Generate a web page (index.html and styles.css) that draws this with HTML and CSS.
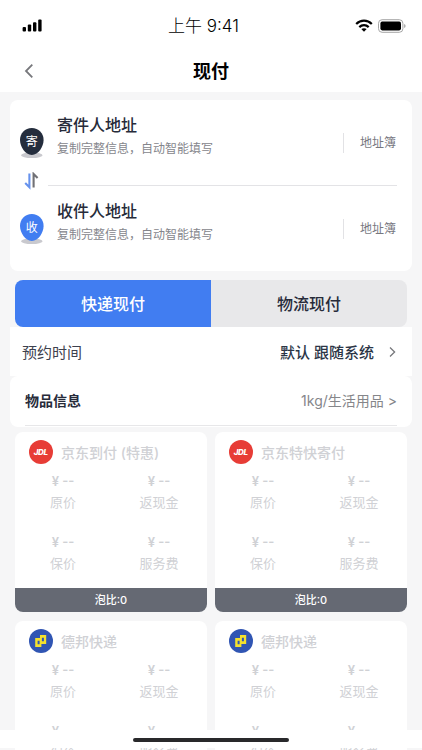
FILE: index.html
```html
<!DOCTYPE html>
<html lang="zh-CN">

<head>
    <meta charset="UTF-8">
    <meta name="viewport" content="width=device-width, initial-scale=1.0">
    <title>现付</title>
    <link rel="stylesheet" href="styles.css">
</head>

<body>

    <header>
        <div class="status-bar">
            <svg class="signal" width="20" height="13" viewBox="0 0 20 13">
                <rect x="0.6" y="8" width="3.4" height="4.6" rx="1"/>
                <rect x="5.8" y="5.6" width="3.4" height="7" rx="1"/>
                <rect x="11" y="3.2" width="3.4" height="9.4" rx="1"/>
                <rect x="16.2" y="0.4" width="3.4" height="12.2" rx="1"/>
            </svg>
            <span class="time">上午 9:41</span>
            <div class="status-right">
                <svg width="18" height="13" viewBox="0 0 18 13">
                    <g fill="none" stroke="#000" stroke-width="2.2">
                        <path d="M1.2 5C5.6 0.6 12.4 0.6 16.8 5"/>
                        <path d="M4.3 8.1C7 5.5 11 5.5 13.7 8.1"/>
                    </g>
                    <path d="M6.3 10.1C7.8 8.8 10.2 8.8 11.7 10.1L9 12.7Z"/>
                </svg>
                <svg width="28" height="14" viewBox="0 0 28 14">
                    <rect x="0.5" y="0.7" width="24.4" height="12.6" rx="3.6" fill="#fff" stroke="#a6a6a6"/>
                    <rect x="2.4" y="2.6" width="20.6" height="8.8" rx="1.8"/>
                    <path d="M26.1 5V9Q27.6 8.3 27.6 7T26.1 5Z" fill="#a6a6a6"/>
                </svg>
            </div>
        </div>
        <div class="nav">
            <svg width="10" height="16" viewBox="0 0 10 16"><path d="M8.3 1.7L2 8L8.3 14.3" fill="none" stroke="#77787c" stroke-width="1.8"/></svg>
            <h1>现付</h1>
        </div>
    </header>

    <main>
        <div class="address">
            <div class="address-row">
                <svg class="pin" width="24" height="32" viewBox="0 0 24 32">
                    <ellipse cx="11.8" cy="27.2" rx="10.8" ry="2.9" fill="#c9c9ce"/>
                    <path d="M11.8 0C5 0 0 5.1 0 12C0 18.5 5.2 27 11.8 27S23.6 18.5 23.6 12C23.6 5.1 18.6 0 11.8 0Z" fill="#242d3d"/>
                    <text x="11.8" y="18" text-anchor="middle">寄</text>
                </svg>
                <div class="address-text">
                    <h2>寄件人地址</h2>
                    <p>复制完整信息，自动智能填写</p>
                </div>
                <span class="book">地址簿</span>
            </div>
            <div class="swap">
                <svg width="16" height="18" viewBox="0 0 16 18" fill="none" stroke-width="2.1">
                    <path d="M5.4 1.6V15.2L1.2 11" stroke="#6692ed"/>
                    <path d="M9.6 15.6V2L13.6 6" stroke="#717176"/>
                </svg>
                <div class="line"></div>
            </div>
            <div class="address-row">
                <svg class="pin" width="24" height="32" viewBox="0 0 24 32">
                    <ellipse cx="11.8" cy="27.2" rx="10.8" ry="2.9" fill="#c9c9ce"/>
                    <path d="M11.8 0C5 0 0 5.1 0 12C0 18.5 5.2 27 11.8 27S23.6 18.5 23.6 12C23.6 5.1 18.6 0 11.8 0Z" fill="#417df1"/>
                    <text x="11.8" y="18" text-anchor="middle">收</text>
                </svg>
                <div class="address-text">
                    <h2>收件人地址</h2>
                    <p>复制完整信息，自动智能填写</p>
                </div>
                <span class="book">地址簿</span>
            </div>
        </div>

        <div class="tabs">
            <div class="tab active">快递现付</div>
            <div class="tab">物流现付</div>
        </div>

        <div class="time-row">
            <span>预约时间</span>
            <strong>默认 跟随系统</strong>
            <svg width="7" height="12" viewBox="0 0 7 12"><path d="M1 1.5L5.6 6L1 10.5" fill="none" stroke="#77787c" stroke-width="1.3"/></svg>
        </div>

        <div class="goods-row">
            <div class="goods">
                <strong>物品信息</strong>
                <span>1kg/生活用品 &gt;</span>
            </div>
        </div>

        <div class="list">
            <div class="card">
                <div class="card-title">
                    <svg width="24" height="24" viewBox="0 0 24 24"><circle cx="12" cy="12" r="12" fill="#e73c36"/><text class="jdl" x="11.7" y="15.2" text-anchor="middle">JDL</text></svg>
                    <span>京东到付 (特惠)</span>
                </div>
                <div class="prices">
                    <div><b>¥ --</b><span>原价</span></div>
                    <div><b>¥ --</b><span>返现金</span></div>
                    <div><b>¥ --</b><span>保价</span></div>
                    <div><b>¥ --</b><span>服务费</span></div>
                </div>
                <div class="ratio">泡比:0</div>
            </div>
            <div class="card">
                <div class="card-title">
                    <svg width="24" height="24" viewBox="0 0 24 24"><circle cx="12" cy="12" r="12" fill="#e73c36"/><text class="jdl" x="11.7" y="15.2" text-anchor="middle">JDL</text></svg>
                    <span>京东特快寄付</span>
                </div>
                <div class="prices">
                    <div><b>¥ --</b><span>原价</span></div>
                    <div><b>¥ --</b><span>返现金</span></div>
                    <div><b>¥ --</b><span>保价</span></div>
                    <div><b>¥ --</b><span>服务费</span></div>
                </div>
                <div class="ratio">泡比:0</div>
            </div>
            <div class="card">
                <div class="card-title">
                    <svg width="24" height="24" viewBox="0 0 24 24">
                        <circle cx="12" cy="12" r="12" fill="#3055b3"/>
                        <path d="M11 6H17.2V15H12.4V17.9H6.2V9H11Z" fill="#f3e12d"/>
                        <path d="M12.9 8.8H14.9V12.2H12.9ZM8.6 11.8H10.6V15.2H8.6Z" fill="#3055b3"/>
                    </svg>
                    <span>德邦快递</span>
                </div>
                <div class="prices">
                    <div><b>¥ --</b><span>原价</span></div>
                    <div><b>¥ --</b><span>返现金</span></div>
                    <div><b>¥ --</b><span>保价</span></div>
                    <div><b>¥ --</b><span>服务费</span></div>
                </div>
            </div>
            <div class="card">
                <div class="card-title">
                    <svg width="24" height="24" viewBox="0 0 24 24">
                        <circle cx="12" cy="12" r="12" fill="#3055b3"/>
                        <path d="M11 6H17.2V15H12.4V17.9H6.2V9H11Z" fill="#f3e12d"/>
                        <path d="M12.9 8.8H14.9V12.2H12.9ZM8.6 11.8H10.6V15.2H8.6Z" fill="#3055b3"/>
                    </svg>
                    <span>德邦快递</span>
                </div>
                <div class="prices">
                    <div><b>¥ --</b><span>原价</span></div>
                    <div><b>¥ --</b><span>返现金</span></div>
                    <div><b>¥ --</b><span>保价</span></div>
                    <div><b>¥ --</b><span>服务费</span></div>
                </div>
            </div>
        </div>
    </main>

    <div class="home-bar"><div class="home-line"></div></div>

</body>

</html>
```

FILE: styles.css
```css
* {
    box-sizing: border-box;
}

body {
    font-family: Inter, 'Noto Sans CJK SC', sans-serif;
    margin: 0;
    height: 750px;
    overflow: hidden;
    background-color: #f6f6f7;
    color: #272b3a;
}

h1, h2, p {
    margin: 0;
}

svg {
    display: block;
    flex-shrink: 0;
}

header {
    height: 92px;
    background-color: #fff;
    color: #000;
}

.status-bar {
    display: grid;
    grid-template-columns: 1fr auto 1fr;
    align-items: center;
    height: 51px;
    padding: 0 16px 0 22px;
}

.time {
    font-size: 17px;
    font-weight: 300;
    line-height: 24px;
    padding-right: 21px;
    white-space: nowrap;
}

.status-right {
    display: flex;
    justify-content: flex-end;
    align-items: center;
    gap: 5px;
}

.nav {
    display: flex;
    align-items: center;
    height: 39px;
    padding-left: 24px;
}

.nav h1 {
    flex: 1;
    margin-right: 34px;
    padding-bottom: 2px;
    text-align: center;
    font-size: 18px;
    font-weight: 700;
}

main {
    padding: 8px 10px 0;
}

.address {
    height: 171px;
    border-radius: 8px;
    background-color: #fff;
    padding: 11px 15px 0 10px;
}

.address-row {
    display: flex;
    height: 62px;
}

.pin {
    margin-top: 17px;
}

.pin text {
    font-size: 12px;
    fill: #fff;
}

.address-text {
    flex: 1;
    margin-left: 13px;
}

.address-text h2 {
    font-size: 16px;
    font-weight: 500;
    line-height: 28px;
}

.address-text p {
    font-size: 12px;
    line-height: 19px;
    color: #85868c;
}

.book {
    height: 20px;
    margin-top: 22px;
    padding-left: 16px;
    padding-right: 1px;
    border-left: 1px solid #e2e2e5;
    font-size: 12px;
    line-height: 20px;
    color: #77787f;
}

.swap {
    display: flex;
    align-items: flex-start;
    height: 24px;
    padding-left: 4px;
}

.swap svg {
    margin-top: -1px;
}

.line {
    flex: 1;
    margin: 12px 0 0 8px;
    border-top: 1px solid #e3e3e6;
}

.tabs {
    display: flex;
    height: 47px;
    margin: 9px 5px 0;
    border-radius: 8px;
    overflow: hidden;
}

.tab {
    flex: 1;
    background-color: #e8e8ea;
    font-size: 16px;
    font-weight: 500;
    line-height: 48px;
    text-align: center;
}

.tab.active {
    background-color: #417df1;
    color: #fff;
}

.time-row {
    display: flex;
    align-items: center;
    height: 49px;
    padding: 0 16px 0 12px;
    background-color: #fff;
    font-size: 15px;
    color: #3d414e;
}

.time-row strong {
    margin-left: auto;
    margin-right: 15px;
    font-weight: 500;
    color: #2b3546;
}

.goods-row {
    height: 51px;
    padding: 0 15px;
    border-radius: 8px;
    background-color: #fff;
}

.goods {
    display: flex;
    align-items: center;
    justify-content: space-between;
    height: 50px;
    padding-bottom: 2px;
    border-bottom: 1px solid #e7e7e9;
    font-size: 14px;
}

.goods strong {
    font-weight: 700;
}

.goods span {
    color: #85868a;
}

.list {
    display: grid;
    grid-template-columns: 192px 192px;
    gap: 9.4px 8px;
    margin: 5px 5px 0;
}

.card {
    display: flex;
    flex-direction: column;
    height: 180px;
    border-radius: 8px;
    background-color: #fff;
    overflow: hidden;
    color: #d0d1d5;
}

.card-title {
    display: flex;
    align-items: center;
    gap: 8px;
    height: 39px;
    flex-shrink: 0;
    padding-left: 14px;
    font-size: 14px;
    font-weight: 500;
}

.jdl {
    font-size: 8px;
    font-weight: 800;
    font-style: italic;
    letter-spacing: -0.3px;
    fill: #fff;
}

.prices {
    display: grid;
    grid-template-columns: 96px 96px;
    grid-auto-rows: 61px;
    flex: 1;
    min-height: 0;
    text-align: center;
}

.prices b,
.prices span {
    display: block;
    font-size: 13px;
    line-height: 21px;
}

.prices b {
    font-weight: 600;
}

.ratio {
    height: 24px;
    flex-shrink: 0;
    background-color: #656973;
    color: #fff;
    font-size: 11px;
    font-weight: 500;
    line-height: 24px;
    text-align: center;
}

/* iOS home indicator, lies over the list */
.home-bar {
    position: absolute;
    left: 0;
    top: 730px;
    display: flex;
    align-items: center;
    justify-content: center;
    width: 100%;
    height: 18px;
    background-color: #fff;
}

.home-line {
    width: 156px;
    height: 4px;
    margin-top: 2px;
    border-radius: 2px;
    background-color: #29292b;
}
```
